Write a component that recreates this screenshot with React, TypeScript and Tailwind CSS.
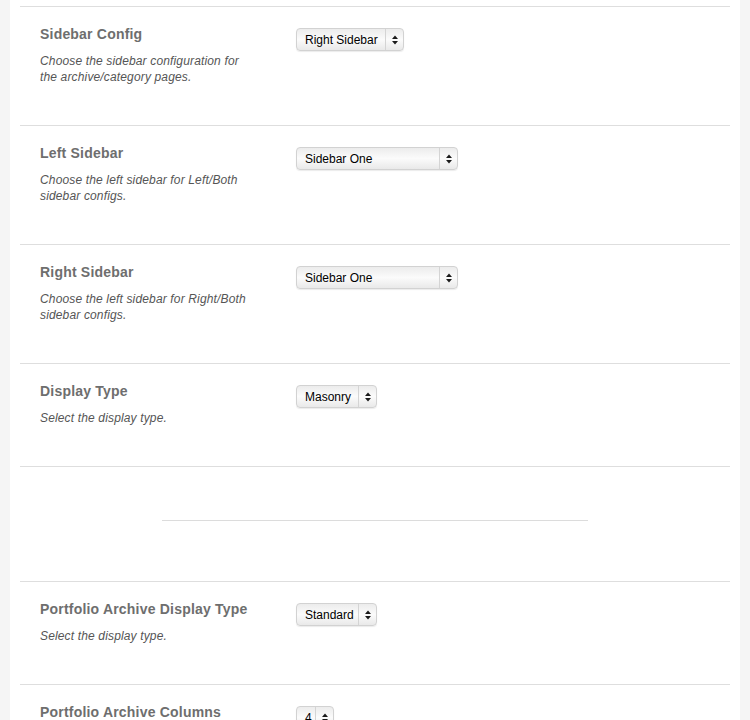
import React from "react";

type Row = {
  title: string;
  desc: string;
  value: string;
  width: string;
};

const rowsTop: Row[] = [
  {
    title: "Sidebar Config",
    desc: "Choose the sidebar configuration for the archive/category pages.",
    value: "Right Sidebar",
    width: "w-[108px]",
  },
  {
    title: "Left Sidebar",
    desc: "Choose the left sidebar for Left/Both sidebar configs.",
    value: "Sidebar One",
    width: "w-[162px]",
  },
  {
    title: "Right Sidebar",
    desc: "Choose the left sidebar for Right/Both sidebar configs.",
    value: "Sidebar One",
    width: "w-[162px]",
  },
  {
    title: "Display Type",
    desc: "Select the display type.",
    value: "Masonry",
    width: "w-[81px]",
  },
];

const rowsBottom: Row[] = [
  {
    title: "Portfolio Archive Display Type",
    desc: "Select the display type.",
    value: "Standard",
    width: "w-[81px]",
  },
  {
    title: "Portfolio Archive Columns",
    desc: "Select the number of columns.",
    value: "4",
    width: "w-[38px]",
  },
];

export default function App() {
  return (
    <div
      className="min-h-[720px] bg-[#f5f5f5] px-[10px]"
      style={{ fontFamily: '"Liberation Sans", Arial, sans-serif' }}
    >
      <div className="min-h-[720px] bg-white px-[10px] pt-[6px]">
        {rowsTop.map((r, i) => (
          <OptionRow key={i} row={r} />
        ))}

        {/* spacer with centered rule */}
        <div className="border-t border-[#dedede] pt-[53px] pb-[60px]">
          <div className="mx-auto w-[426px] border-t border-[#dcdcdc]" />
        </div>

        {rowsBottom.map((r, i) => (
          <OptionRow key={i} row={r} />
        ))}
      </div>
    </div>
  );
}

function OptionRow({ row }: { row: Row }) {
  return (
    <div className="flex border-t border-[#dedede] pl-[20px] pt-[17px] pb-[40px]">
      <div className="w-[256px] shrink-0">
        <h3 className="text-[14px] leading-[20px] font-bold tracking-[0.2px] text-[#6e6e6e]">
          {row.title}
        </h3>
        <p className="mt-[9px] max-w-[210px] text-[12px] leading-[16px] italic tracking-[0.15px] text-[#555]">
          {row.desc}
        </p>
      </div>
      <div className="pt-[4px]">
        <FakeSelect value={row.value} width={row.width} />
      </div>
    </div>
  );
}

function FakeSelect({ value, width }: { value: string; width: string }) {
  return (
    <div
      className={`flex h-[23px] items-stretch rounded-[4px] border border-[#d2d2d2] bg-gradient-to-b from-[#ececec] via-[#fbfbfb] to-[#e9e9e9] shadow-[0_1px_1px_rgba(0,0,0,0.08)] ${width}`}
    >
      <span className="flex flex-1 items-center overflow-hidden whitespace-nowrap pl-[8px] text-[12px] text-black">
        {value}
      </span>
      <span className="flex w-[18px] items-center justify-center border-l border-[#d4d4d4]">
        <svg width="6" height="10" viewBox="0 0 6 10">
          <polygon points="0,4 3,0.5 6,4" fill="#1a1a1a" />
          <polygon points="0,6 3,9.5 6,6" fill="#1a1a1a" />
        </svg>
      </span>
    </div>
  );
}
